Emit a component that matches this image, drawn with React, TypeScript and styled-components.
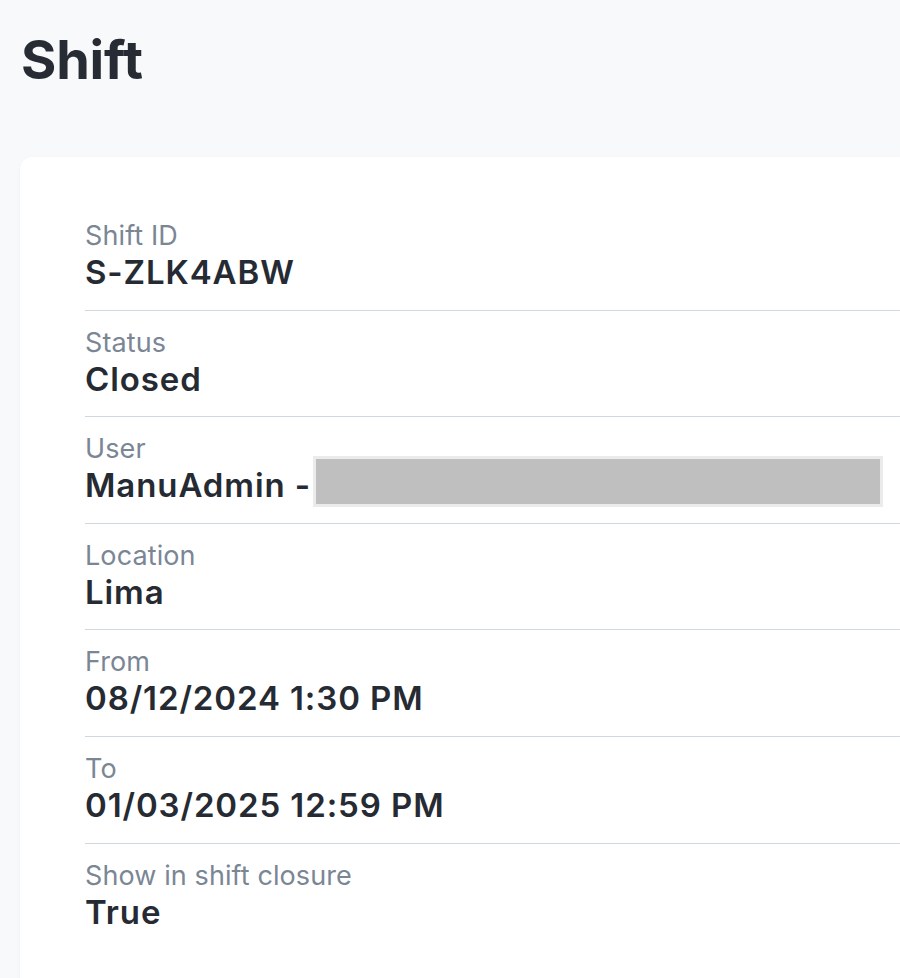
import styled, { createGlobalStyle } from 'styled-components';

const GlobalStyle = createGlobalStyle`
  html, body {
    margin: 0;
    padding: 0;
    background: #f8f9fb;
    overflow: hidden;
  }
  body {
    font-family: Inter, "Noto Sans", "Liberation Sans", sans-serif;
    color: #262b33;
  }
`;

const fields = [
  { label: 'Shift ID', value: 'S-ZLK4ABW' },
  { label: 'Status', value: 'Closed' },
  { label: 'User', value: 'ManuAdmin -', redacted: true },
  { label: 'Location', value: 'Lima' },
  { label: 'From', value: '08/12/2024 1:30 PM' },
  { label: 'To', value: '01/03/2025 12:59 PM' },
  { label: 'Show in shift closure', value: 'True' },
];

export default function App() {
  return (
    <>
      <GlobalStyle />
      <Page>
        <Title>Shift</Title>
        <Card>
          <List>
            {fields.map((f, i) => (
              <Row key={f.label} $last={i === fields.length - 1}>
                <Label>{f.label}</Label>
                <Value>
                  {f.value}
                  {f.redacted && <Redacted />}
                </Value>
              </Row>
            ))}
          </List>
        </Card>
      </Page>
    </>
  );
}

const Page = styled.div`
  padding: 22px 0 0 20px;
  min-height: 978px;
  box-sizing: border-box;
`;

const Title = styled.h1`
  margin: 0 0 0 1px;
  font-size: 54px;
  line-height: 76px;
  font-weight: 700;
  color: #272c34;
  letter-spacing: -0.2px;
`;

const Card = styled.div`
  margin-top: 59px;
  width: 1000px;
  min-height: 840px;
  background: #ffffff;
  border-radius: 12px;
  box-shadow: 0 1px 4px rgba(20, 30, 50, 0.04);
  padding: 47px 0 0 65px;
  box-sizing: border-box;
`;

const List = styled.div`
  display: flex;
  flex-direction: column;
`;

const Row = styled.div<{ $last?: boolean }>`
  display: flex;
  flex-direction: column;
  padding: 16px 0 17.6px;
  border-bottom: ${(p) => (p.$last ? 'none' : '1px solid #cfd7df')};
`;

const Label = styled.div`
  font-size: 27px;
  line-height: 32px;
  color: #7b8695;
  font-weight: 400;
  letter-spacing: 0.1px;
`;

const Value = styled.div`
  font-size: 33px;
  line-height: 40px;
  font-weight: 600;
  color: #262b33;
  letter-spacing: 0.9px;
  white-space: nowrap;
`;

const Redacted = styled.span`
  display: inline-block;
  vertical-align: top;
  box-sizing: border-box;
  width: 570px;
  height: 51px;
  margin: -9px 0 -2px 2px;
  background: #bfbfbf;
  border: 3px solid #ebebeb;
`;
